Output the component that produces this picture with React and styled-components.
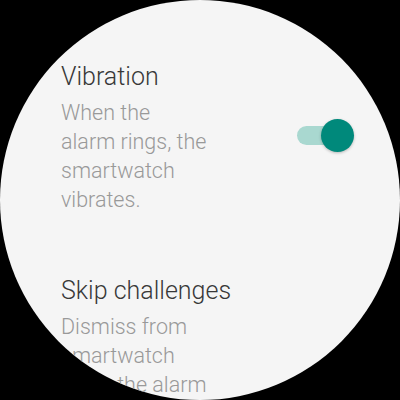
import React from "react";
import styled, { createGlobalStyle } from "styled-components";

const Global = createGlobalStyle`
  html, body { margin: 0; padding: 0; background: #000; }
  body { font-family: Roboto, "Noto Sans", sans-serif; }
`;

const Screen = styled.div`
  width: 400px;
  height: 400px;
  background: #000;
`;

const Watch = styled.div`
  width: 400px;
  height: 400px;
  border-radius: 50%;
  overflow: hidden;
  background: #f5f5f5;
`;

const List = styled.div`
  display: flex;
  flex-direction: column;
  gap: 62px;
  padding: 62px 46px 0 61px;
`;

const Row = styled.div`
  display: flex;
  align-items: center;
  justify-content: space-between;
`;

const TextCol = styled.div`
  display: flex;
  flex-direction: column;
  gap: 6px;
`;

const Title = styled.div`
  font-size: 25px;
  line-height: 30px;
  font-weight: 300;
  color: #383838;
  white-space: nowrap;
`;

const Desc = styled.div`
  font-size: 21.5px;
  line-height: 29px;
  font-weight: 300;
  color: #999999;
  white-space: nowrap;
`;

const Toggle = styled.div`
  position: relative;
  width: 57px;
  height: 33px;
  margin-bottom: 6px;
  flex: none;
`;

const Track = styled.div`
  position: absolute;
  left: 0;
  top: 7px;
  width: 46px;
  height: 19px;
  border-radius: 10px;
  background: #a9d8d0;
`;

const Thumb = styled.div`
  position: absolute;
  right: 0;
  top: 0;
  width: 33px;
  height: 33px;
  border-radius: 50%;
  background: #00897b;
  box-shadow: 0 1px 3px rgba(0, 0, 0, 0.25);
`;

export default function App() {
  return (
    <>
      <Global />
      <Screen>
        <Watch>
          <List>
            <Row>
              <TextCol>
                <Title>Vibration</Title>
                <Desc>
                  When the
                  <br />
                  alarm rings, the
                  <br />
                  smartwatch
                  <br />
                  vibrates.
                </Desc>
              </TextCol>
              <Toggle>
                <Track />
                <Thumb />
              </Toggle>
            </Row>
            <Row>
              <TextCol>
                <Title>Skip challenges</Title>
                <Desc>
                  Dismiss from
                  <br />
                  smartwatch
                  <br />
                  when the alarm
                  <br />
                  rings.
                </Desc>
              </TextCol>
            </Row>
          </List>
        </Watch>
      </Screen>
    </>
  );
}
